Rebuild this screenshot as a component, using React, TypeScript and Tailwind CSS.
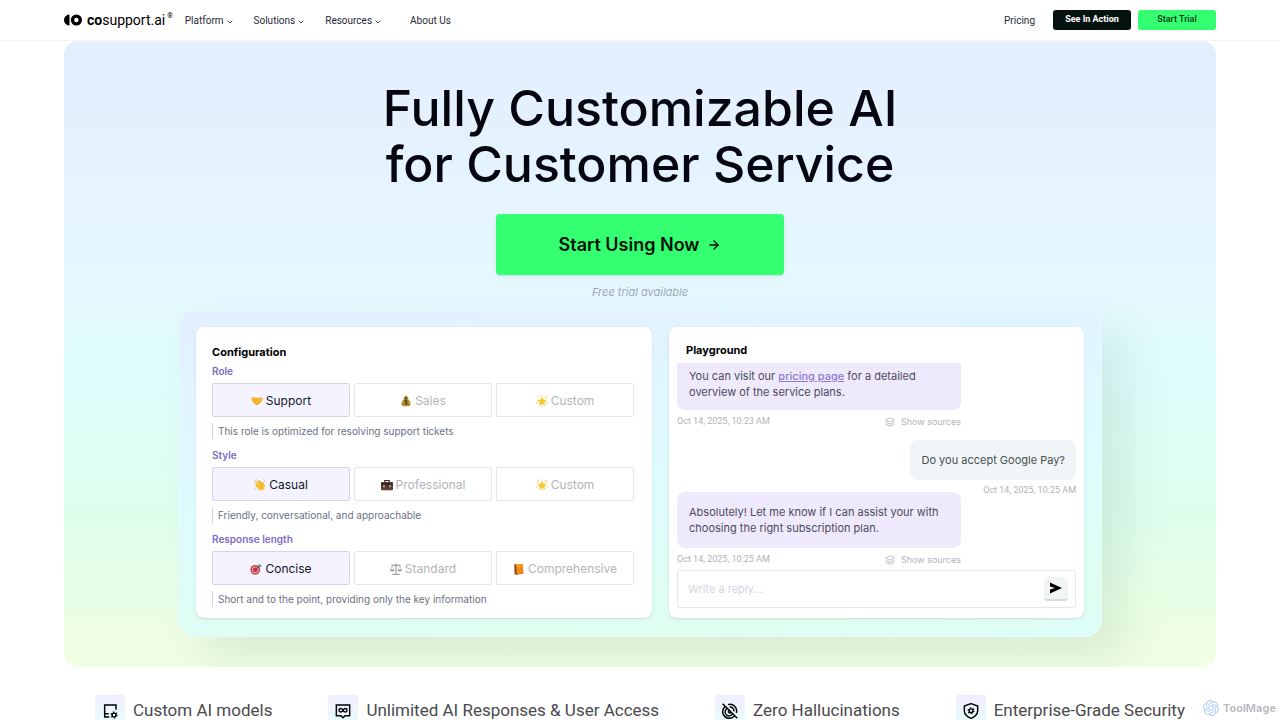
import { useState } from 'react'
import type { ReactNode } from 'react'
import { ArrowRight, ChevronDown, Layers } from 'lucide-react'
import { SiOpenai } from 'react-icons/si'
import clsx from 'clsx'

type EmojiName = 'handshake' | 'money' | 'star' | 'wave' | 'briefcase' | 'target' | 'scales' | 'book'

const emojiShapes: Record<EmojiName, ReactNode> = {
  handshake: (
    <>
      <path d="M0 5 3 2.500l5 1.500 5-1.500L16 5l-2 4-5 4.500H7L2 9z" fill="#f7b92f" />
      <path d="M8 4 5 7c1 1 2 1 3 0l4 4M5 11l2 2M9 11l1 1" stroke="#d98a1b" strokeWidth="0.8" fill="none" />
    </>
  ),
  money: (
    <>
      <path d="M6 1h4l-1 3c3 2 5 5 5 8 0 2-1 3-3 3H5c-2 0-3-1-3-3 0-3 2-6 5-8z" fill="#b98d33" />
      <path d="M5 4h6" stroke="#4a3516" strokeWidth="1.5" />
      <path d="M10 7.500c-1-1-4-1-4 .5 0 2 4 1 4 3 0 1.500-3 1.500-4 .5M8 6v7" stroke="#3d2c10" strokeWidth="1" fill="none" />
    </>
  ),
  star: (
    <>
      <path d="m8 2.500 2 3.500 4.500.5-3.300 3 1.100 4.500L8 12l-4.300 2 1.100-4.500-3.300-3L6 6z" fill="#f5cb34" />
      <path d="M8 0v2M1.500 1.500l2.500 2.500M14.500 1.500 12 4M0 11l3-1M16 11l-3-1M8 13v3" stroke="#f3dc6c" strokeWidth="1.500" />
    </>
  ),
  wave: (
    <>
      <path
        d="m7.500 14-5-6M6.500 10 2.500 4.500M9 8.500 4.800 2.800M11 7.500 7.500 2.500M13 9.500 12.500 5"
        stroke="#fbc238"
        strokeWidth="2.200"
        strokeLinecap="round"
      />
      <path d="m4 8 7-2 3 2c1 4-1 7-4 7-2 0-4-2-6-5z" fill="#fbc238" />
      <path d="m4.500 6.500 3 3.500M6.500 4.500l3 4M9 4l2 3M9 12c0-2 1-3 3-3" stroke="#d68f1e" strokeWidth="0.7" fill="none" />
      <path d="M.5 4.500c0-2 1-3 3-4M12.500 1c1.500.5 2 1.500 2.500 3M1 12c0 1.500 1 2.500 2.500 3" stroke="#9fb2c0" strokeWidth="0.9" fill="none" />
    </>
  ),
  briefcase: (
    <>
      <path d="M5 4V2h6v2" stroke="#3c2b25" strokeWidth="1.500" fill="none" />
      <rect x="0" y="4" width="16" height="11" rx="1.500" fill="#5b4038" />
      <path d="M0 5h16v3l-8 2-8-2z" fill="#3f2a25" />
      <path d="M3 8h2v3H3zM11 8h2v3h-2z" fill="#c9b7a4" />
    </>
  ),
  target: (
    <>
      <circle cx="7" cy="9" r="6.500" fill="#c9394a" />
      <circle cx="7" cy="9" r="4.500" fill="#eec9cd" />
      <circle cx="7" cy="9" r="3.400" fill="#c9394a" />
      <path d="m7 9 6-6" stroke="#36474f" strokeWidth="1.200" />
      <path d="m11.500 4 .5-3.500 1.500 2L16 3l-2 2.500z" fill="#2ba59b" />
    </>
  ),
  scales: (
    <>
      <path d="M8 1v13M2 3h12M3 15h10" stroke="#7f8789" strokeWidth="1.300" />
      <path d="m3 3-2 6h4zM13 3l-2 6h4z" stroke="#a5acad" strokeWidth="0.800" fill="none" />
      <path d="M0 9h6c0 3-6 3-6 0zM10 9h6c0 3-6 3-6 0z" fill="#8d9496" />
    </>
  ),
  book: (
    <>
      <path d="M2 2 13 1l1 12-11 2z" fill="#f08a13" />
      <path d="M2 2c1-1 2-1 2 0l1 12.500-2 .5c-1 0-1-1-1-1z" fill="#8a4310" />
      <path d="m7 4 4-.5M7 5.500l4-.5" stroke="#ffc35d" strokeWidth="0.700" />
      <path d="m3 15 11-2v1L4 16z" fill="#b9591b" />
    </>
  )
}

function Emoji({ name }: { name: EmojiName }) {
  return (
    <svg viewBox="0 0 16 16" className="size-3 shrink-0" fill="none" aria-hidden="true">
      {emojiShapes[name]}
    </svg>
  )
}

interface SettingGroup {
  label: string
  hint: string
  options: { icon: EmojiName; text: string }[]
}

const settingGroups: SettingGroup[] = [
  {
    label: 'Role',
    hint: 'This role is optimized for resolving support tickets',
    options: [
      { icon: 'handshake', text: 'Support' },
      { icon: 'money', text: 'Sales' },
      { icon: 'star', text: 'Custom' }
    ]
  },
  {
    label: 'Style',
    hint: 'Friendly, conversational, and approachable',
    options: [
      { icon: 'wave', text: 'Casual' },
      { icon: 'briefcase', text: 'Professional' },
      { icon: 'star', text: 'Custom' }
    ]
  },
  {
    label: 'Response length',
    hint: 'Short and to the point, providing only the key information',
    options: [
      { icon: 'target', text: 'Concise' },
      { icon: 'scales', text: 'Standard' },
      { icon: 'book', text: 'Comprehensive' }
    ]
  }
]

function Logo() {
  return (
    <a href="#" className="flex items-center gap-[5px] text-black">
      <svg viewBox="0 0 18 12" className="h-3 w-[18px]" aria-hidden="true">
        <path d="M5.500 0.500v11C2.500 11.500 0 9 0 6S2.500.5 5.500.5z" fill="#000" />
        <circle cx="12.400" cy="6" r="3.900" fill="none" stroke="#000" strokeWidth="3.400" />
      </svg>
      <span className="flex items-start text-sm leading-5">
        <b className="font-bold">co</b>support.ai
        <span className="ml-0.5 text-[7px] leading-3">®</span>
      </span>
    </a>
  )
}

function Header() {
  return (
    <header className="flex h-[41px] items-center border-b border-gray-100 bg-white px-16 font-[Roboto,sans-serif] text-[10px] text-gray-800">
      <Logo />
      <nav className="ml-3 flex items-center gap-5">
        {['Platform', 'Solutions', 'Resources'].map(item => (
          <button key={item} className="flex items-center gap-0.5">
            {item}
            <ChevronDown className="mt-1 size-2" strokeWidth={2.5} />
          </button>
        ))}
        <a href="#" className="ml-2">About Us</a>
      </nav>
      <a href="#" className="mr-[18px] ml-auto">Pricing</a>
      <a href="#" className="mr-[7px] flex h-5 w-[78px] items-center justify-center rounded-[3px] bg-[#06120f] text-[9px] font-bold text-white">
        See In Action
      </a>
      <a href="#" className="flex h-5 w-[78px] items-center justify-center rounded-[3px] bg-[#33ff70] text-[9px] font-medium text-[#06351a]">
        Start Trial
      </a>
    </header>
  )
}

function SettingRow({ group }: { group: SettingGroup }) {
  const [selected, setSelected] = useState(0)

  return (
    <div className="mb-2 last:mb-0">
      <h3 className="text-[10px] leading-4 font-semibold text-[#7c6bc4]">{group.label}</h3>
      <div className="mt-1 grid grid-cols-3 gap-1">
        {group.options.map((option, index) => (
          <button
            key={option.text}
            onClick={() => setSelected(index)}
            aria-pressed={selected === index}
            className={clsx(
              'flex h-[34px] items-center justify-center gap-[3px] rounded-xs border pt-0.5 text-xs',
              selected === index
                ? 'border-[#d8d2ec] bg-[#f5f3ff] text-gray-900'
                : 'border-gray-200 bg-white text-[#b4b4b8]'
            )}
          >
            <Emoji name={option.icon} />
            {option.text}
          </button>
        ))}
      </div>
      <p className="mt-1.5 border-l border-gray-300 pl-[5px] text-[10px] leading-4 text-gray-500">{group.hint}</p>
    </div>
  )
}

function MessageMeta({ time }: { time: string }) {
  return (
    <div className="flex h-[22px] items-center justify-between pt-0.5 text-[9px] text-[#b2b2b8]">
      <time className="font-[Roboto,sans-serif]">{time}</time>
      <button className="flex items-center gap-1.5">
        <Layers className="size-2.5" />
        Show sources
      </button>
    </div>
  )
}

function Playground() {
  return (
    <section className="rounded-lg bg-white px-2 pt-3 pb-2.5 shadow-sm">
      <h2 className="ml-[9px] h-6 text-[11px] leading-[22px] font-bold text-black">Playground</h2>
      <div className="w-[284px]">
        <p className="h-[47px] rounded-b-lg bg-[#eeeafc] px-3 pt-[5px] text-[11px] leading-4 text-[#4c4a5c]">
          You can visit our <a href="#" className="font-medium text-[#8b7bd0] underline">pricing page</a> for a detailed
          <br />
          overview of the service plans.
        </p>
        <MessageMeta time="Oct 14, 2025, 10:23 AM" />
      </div>
      <div className="mt-2 flex flex-col items-end">
        <p className="rounded-lg bg-[#f0f5f7] px-[11px] py-3 text-[11px] leading-4 text-[#484e54]">Do you accept Google Pay?</p>
        <time className="h-3 font-[Roboto,sans-serif] text-[9px] leading-5 text-[#b2b2b8]">Oct 14, 2025, 10:25 AM</time>
      </div>
      <div className="w-[284px]">
        <p className="rounded-lg bg-[#eeeafc] px-3 py-3 text-[11px] leading-4 text-[#4c4a5c]">
          Absolutely! Let me know if I can assist your with choosing the right subscription plan.
        </p>
        <MessageMeta time="Oct 14, 2025, 10:25 AM" />
      </div>
      <form className="flex h-[38px] items-center rounded-xs border border-gray-200 pr-[7px] pl-2.5" onSubmit={e => e.preventDefault()}>
        <input
          aria-label="Reply"
          placeholder="Write a reply..."
          className="min-w-0 flex-1 text-[11px] text-gray-700 outline-none placeholder:text-gray-300"
        />
        <button
          aria-label="Send"
          className="flex h-6 w-6 items-center justify-center rounded-sm border-b-2 border-[#d3dade] bg-[#f1f5f6]"
        >
          <svg viewBox="0 0 12 12" className="size-3" aria-hidden="true">
            <path d="M0 .5 12 6 0 11.500V7.500L5 6 0 4.500z" fill="#000" />
          </svg>
        </button>
      </form>
    </section>
  )
}

function Hero() {
  return (
    <section className="mx-16 overflow-hidden rounded-[14px] bg-[linear-gradient(180deg,#e4effd_0%,#e6f7ff_40%,#ddfcfc_52%,#defeec_76%,#f2ffe2_100%)] px-[114px] pt-[39px] pb-[30px]">
      <div className="flex flex-col items-center text-center">
        <h1 className="text-[50px] leading-[56px] font-medium text-[#05060f]">
          Fully Customizable AI
          <br />
          for Customer Service
        </h1>
        <a
          href="#"
          className="mt-[22px] flex h-[61px] w-72 items-center justify-center gap-2 rounded-sm bg-[#33ff70] text-lg font-semibold text-[#04120a] shadow-sm"
        >
          Start Using Now
          <ArrowRight className="size-3.5" strokeWidth={2.5} />
        </a>
        <p className="mt-[9px] text-[11px] leading-4 text-[#9aaab5] italic">Free trial available</p>
      </div>
      <div className="mt-2.5 grid grid-cols-[456fr_415fr] gap-[17px] rounded-[18px] border border-white/30 bg-[linear-gradient(175deg,#e3f0ff_0%,#defaff_45%,#dffef0_90%,#dcfdfa_100%)] px-[17px] pt-4 pb-[18px] shadow-[24px_24px_40px_rgba(70,120,100,0.12)]">
        <section className="rounded-lg bg-white pt-4 pr-[18px] pb-[11px] pl-4 shadow-sm">
          <h2 className="h-5 text-[11px] leading-[18px] font-bold text-black">Configuration</h2>
          {settingGroups.map(group => (
            <SettingRow key={group.label} group={group} />
          ))}
        </section>
        <Playground />
      </div>
    </section>
  )
}

// Ring with six short teeth, shared by the models and security icons
function Gear({ cx, cy }: { cx: number; cy: number }) {
  return (
    <>
      <circle cx={cx} cy={cy} r="2.800" strokeWidth="2" />
      <circle cx={cx} cy={cy} r="4.300" strokeWidth="2" strokeDasharray="2.250 2.250" />
    </>
  )
}

const features: { text: string; icon: ReactNode }[] = [
  {
    text: 'Custom AI models',
    icon: (
      <>
        <path d="M21 10V3H4v18h7M4 16h6" />
        <Gear cx={18} cy={18} />
      </>
    )
  },
  {
    text: 'Unlimited AI Responses & User Access',
    icon: (
      <>
        <path d="M2 3h20v16h-7l-3 3-3-3H2z" />
        <path d="M12 11c-2-3.500-6-3.500-6 0s4 3.500 6 0 6-3.500 6 0-4 3.500-6 0z" />
      </>
    )
  },
  {
    text: 'Zero Hallucinations',
    icon: (
      <>
        <path d="M1 1l22 22" />
        <path d="M5 5a10 10 0 1 0 14 14M9 2.500A10 10 0 0 1 21.500 15" />
        <path d="M8 8a6 6 0 1 0 8 8M11.500 6A6 6 0 0 1 18 12.500" />
        <path d="M11 11a2 2 0 1 0 2.500 2.500" />
      </>
    )
  },
  {
    text: 'Enterprise-Grade Security',
    icon: (
      <>
        <path d="M12 1 22 4.500V12c0 5-5 9.500-10 11C7 21.500 2 17 2 12V4.500z" />
        <Gear cx={12} cy={11.5} />
      </>
    )
  }
]

function Features() {
  return (
    <ul className="mt-7 flex justify-between px-[95px] font-[Roboto,sans-serif]">
      {features.map(feature => (
        <li key={feature.text} className="flex items-center gap-2 text-[17px] whitespace-nowrap text-[#4a4a4e]">
          <span className="flex h-8 w-[30px] items-center justify-center rounded-xs bg-linear-to-b from-[#f2edff] to-[#e6fffb]">
            <svg viewBox="0 0 24 24" className="size-4 text-black" fill="none" stroke="currentColor" strokeWidth="2.200" aria-hidden="true">
              {feature.icon}
            </svg>
          </span>
          {feature.text}
        </li>
      ))}
    </ul>
  )
}

export default function App() {
  return (
    <div className="h-screen overflow-hidden bg-white font-[Inter,sans-serif]">
      <Header />
      <main>
        <Hero />
        <Features />
      </main>
      <div className="fixed right-1 bottom-1 flex items-center gap-1 text-[11px] leading-4 font-bold text-[#b9bbc0]">
        <SiOpenai className="size-4 text-[#b4cdf8]" />
        ToolMage
      </div>
    </div>
  )
}
